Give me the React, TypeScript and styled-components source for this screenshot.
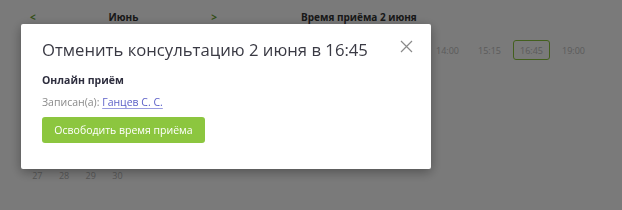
import styled, { createGlobalStyle } from "styled-components";

const GlobalStyle = createGlobalStyle`
    html, body {
        margin: 0;
        padding: 0;
        background: #ffffff;
        font-family: "Open Sans", "Noto Sans", Arial, sans-serif;
    }
`;

const Page = styled.div`
    display: flex;
    flex-direction: row;
    align-items: flex-start;
    width: 622px;
    height: 210px;
    padding: 10px 0 0 24px;
    box-sizing: border-box;
    gap: 77px;
`;

const Calendar = styled.div`
    display: flex;
    flex-direction: column;
    width: 200px;
`;

const MonthHeader = styled.div`
    display: flex;
    justify-content: space-between;
    align-items: center;
    height: 14px;
    padding: 0 7px 0 6px;
    font-size: 10px;
    font-weight: 700;
    color: #333;
`;

const Arrow = styled.span`
    color: #6aa32e;
    font-weight: 700;
`;

// only the last week sticks out below the dialog
const DaysGrid = styled.div`
    display: grid;
    grid-template-columns: repeat(7, 26.7px);
    grid-auto-rows: 25px;
    margin-top: 139px;
    font-size: 9px;
`;

const Day = styled.div`
    display: flex;
    justify-content: center;
    align-items: center;
    color: #b8b8b8;
`;

const Times = styled.div`
    display: flex;
    flex-direction: column;
`;

const TimesTitle = styled.div`
    height: 14px;
    display: flex;
    align-items: center;
    font-size: 10px;
    font-weight: 700;
    color: #333;
`;

const Slots = styled.div`
    display: flex;
    gap: 5px;
    margin-top: 16px;
    margin-left: 128px;
`;

const Slot = styled.div<{ $active?: boolean }>`
    display: flex;
    justify-content: center;
    align-items: center;
    width: 37px;
    height: 20px;
    box-sizing: border-box;
    border: 1px solid ${({ $active }) => ($active ? "#8dc63f" : "transparent")};
    border-radius: 3px;
    font-size: 9px;
    color: #c0c0c0;
`;

const Overlay = styled.div`
    position: fixed;
    inset: 0;
    background: rgba(0, 0, 0, 0.52);
`;

const Modal = styled.div`
    position: absolute;
    left: 21px;
    top: 24px;
    width: 410px;
    height: 145px;
    box-sizing: border-box;
    padding: 13px 20px 0 21px;
    background: #fff;
    border-radius: 2px;
    box-shadow: 0 3px 12px rgba(0, 0, 0, 0.35);
    display: flex;
    flex-direction: column;
`;

const ModalHeader = styled.div`
    display: flex;
    justify-content: space-between;
    align-items: center;
    height: 24px;
`;

const Title = styled.h2`
    margin: 0;
    font-size: 16.7px;
    font-weight: 400;
    color: #3a3a44;
    white-space: nowrap;
`;

const Close = styled.button`
    flex-shrink: 0;
    width: 13px;
    height: 13px;
    padding: 0;
    border: none;
    background: none;
    cursor: pointer;
    margin-top: -6px;
    margin-right: -2px;
`;

const Subtitle = styled.div`
    margin-top: 12px;
    font-size: 10.5px;
    font-weight: 700;
    color: #2e2e3e;
`;

const Booked = styled.div`
    margin-top: 8px;
    font-size: 10.5px;
    color: #8a8a8a;
`;

const PatientLink = styled.a`
    color: #5b5fc7;
    text-decoration: underline;
    text-decoration-color: #9a9ce0;
    text-underline-offset: 2px;
`;

const FreeButton = styled.button`
    margin-top: 8px;
    width: 163px;
    height: 26px;
    border: none;
    border-radius: 3px;
    background: #8cc63f;
    color: #fff;
    font-family: inherit;
    font-size: 10.5px;
    cursor: pointer;
`;

const lastWeek = ["27", "28", "29", "30", "", "", ""];

const slots = ["14:00", "15:15", "16:45", "19:00"];

export default function App() {
    return (
        <>
            <GlobalStyle />
            <Page>
                <Calendar>
                    <MonthHeader>
                        <Arrow>&lt;</Arrow>
                        <span>Июнь</span>
                        <Arrow>&gt;</Arrow>
                    </MonthHeader>
                    <DaysGrid>
                        {lastWeek.map((d, i) => (
                            <Day key={i}>{d}</Day>
                        ))}
                    </DaysGrid>
                </Calendar>
                <Times>
                    <TimesTitle>Время приёма 2 июня</TimesTitle>
                    <Slots>
                        {slots.map((s) => (
                            <Slot key={s} $active={s === "16:45"}>{s}</Slot>
                        ))}
                    </Slots>
                </Times>
            </Page>
            <Overlay>
                <Modal>
                    <ModalHeader>
                        <Title>Отменить консультацию 2 июня в 16:45</Title>
                        <Close aria-label="Закрыть">
                            <svg width="13" height="13" viewBox="0 0 13 13">
                                <path d="M1 1L12 12M12 1L1 12" stroke="#8a8a8a" strokeWidth="1.2" />
                            </svg>
                        </Close>
                    </ModalHeader>
                    <Subtitle>Онлайн приём</Subtitle>
                    <Booked>
                        Записан(а): <PatientLink href="#">Ганцев С. С.</PatientLink>
                    </Booked>
                    <FreeButton>Освободить время приёма</FreeButton>
                </Modal>
            </Overlay>
        </>
    );
}
